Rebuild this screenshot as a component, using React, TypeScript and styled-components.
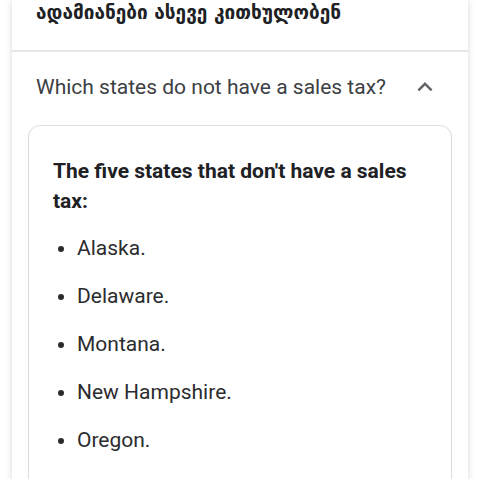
import React from "react";
import styled, { createGlobalStyle } from "styled-components";

const GlobalStyle = createGlobalStyle`
  html, body {
    margin: 0;
    padding: 0;
    background: #ffffff;
    font-family: Roboto, "Liberation Sans", sans-serif;
  }
`;

const Page = styled.div`
  padding: 0 12px;
  height: 479px;
  overflow: hidden;
`;

const Card = styled.div`
  background: #fff;
  box-shadow: 0 0 6px rgba(0, 0, 0, 0.16);
  min-height: 600px;
`;

const Header = styled.div`
  height: 52px;
  padding: 0 24px;
  border-bottom: 2px solid #e6e6e6;
  box-sizing: border-box;
`;

const GeoTitle = styled.div`
  font-family: "DejaVu Sans", sans-serif;
  font-weight: bold;
  font-size: 19px;
  line-height: 24px;
  color: #202124;
`;

const Question = styled.div`
  display: flex;
  align-items: center;
  justify-content: space-between;
  height: 70px;
  padding: 0 28px 0 24px;
  font-size: 21px;
  color: #3c4043;
`;

const Chevron = styled.svg`
  width: 30px;
  height: 30px;
  fill: #5f6368;
`;

const AnswerBox = styled.div`
  margin: 3px 16px 0;
  border: 1px solid #dadce0;
  border-radius: 12px;
  padding: 30px 24px 0;
`;

const Heading = styled.div`
  font-size: 21px;
  font-weight: bold;
  line-height: 30px;
  color: #202124;
`;

const List = styled.ul`
  margin: 18px 0 0;
  padding-left: 24px;
`;

const Item = styled.li`
  font-size: 21px;
  line-height: 28px;
  color: #2b2c2e;
  margin-bottom: 20px;
`;

const states = ["Alaska.", "Delaware.", "Montana.", "New Hampshire.", "Oregon.", "Guam."];

export default function App() {
  return (
    <>
      <GlobalStyle />
      <Page>
        <Card>
          <Header>
            <GeoTitle>ადამიანები ასევე კითხულობენ</GeoTitle>
          </Header>
          <Question>
            <span>Which states do not have a sales tax?</span>
            <Chevron viewBox="0 0 24 24">
              <path d="M7.41 15.41 12 10.83l4.59 4.58L18 14l-6-6-6 6z" />
            </Chevron>
          </Question>
          <AnswerBox>
            <Heading>The five states that don't have a sales tax:</Heading>
            <List>
              {states.map((s) => (
                <Item key={s}>{s}</Item>
              ))}
            </List>
          </AnswerBox>
        </Card>
      </Page>
    </>
  );
}
